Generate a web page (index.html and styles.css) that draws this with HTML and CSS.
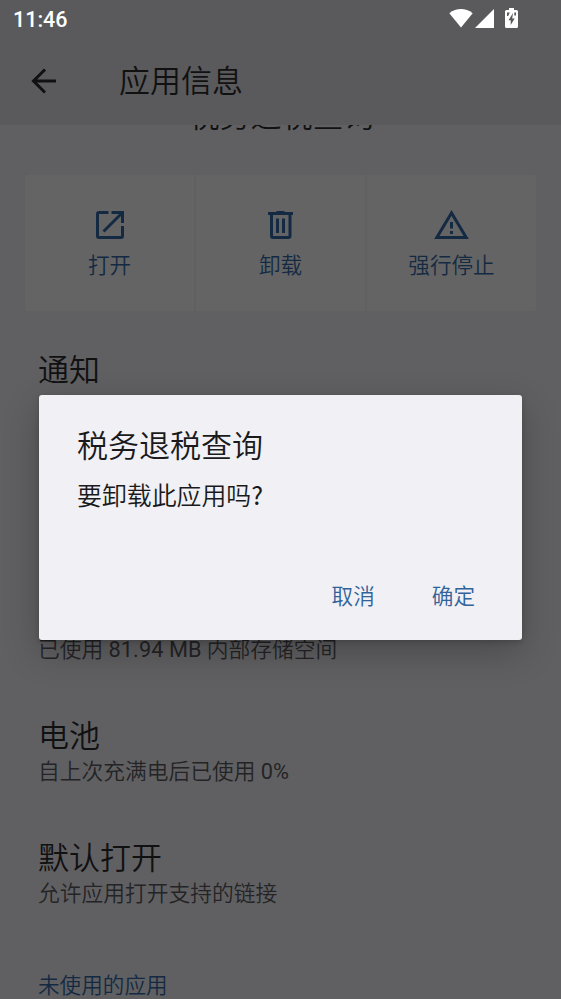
FILE: index.html
```html
<!DOCTYPE html>
<html lang="zh-CN">
<head>
<meta charset="utf-8">
<title>应用信息</title>
<link rel="stylesheet" href="styles.css">
</head>
<body>
<div class="screen">
  <header class="top">
    <div class="status">
      <span class="clock">11:46</span>
      <svg class="status-icons" width="72" height="24" viewBox="0 0 72 24" fill="#fff">
        <path d="M.3 5.2C7.5-.3 16.500-.3 23.700 5.200L12 19.500z"/>
        <path d="M26 20 45 1V20z"/>
        <path fill-rule="evenodd" d="M60 0h5v2h2.500q1.500 0 1.500 1.500v15q0 1.500-1.500 1.500h-10q-1.500 0-1.500-1.500v-15q0-1.500 1.500-1.500h2.500zM64 5l-4.500 7.200h2.200V17l4-6.600h-2.500zM58 4.500v3.500h1.200l1.600-3.500zM65.300 4.500v3h1.700v-3z"/>
      </svg>
    </div>
    <div class="appbar">
      <svg class="back" width="26" height="26" viewBox="0 0 26 26" fill="none" stroke="#111112" stroke-width="3"><path d="M25 13H3M14 1.500 2.500 13 14 24.500"/></svg>
      <h1>应用信息</h1>
    </div>
  </header>
  <main>
    <div class="app-name-clip"><div class="app-name">税务退税查询</div></div>
    <div class="actions">
      <div class="action">
        <svg width="34" height="34" viewBox="-1 0 34 34" fill="none" stroke="#142a43" stroke-width="3"><path d="M14.500 4.500H5q-1.500 0-1.500 1.500v22q0 1.500 1.500 1.500h22q1.500 0 1.500-1.500V18M17.500 4.500h11V15M28 5 9.500 23.500"/></svg>
        <span>打开</span>
      </div>
      <div class="action">
        <svg width="34" height="34" viewBox="0 0 34 34" fill="none" stroke="#142a43" stroke-width="3"><path d="M4 5.500h25M12.500 4.500h8M7.500 6v22q0 1.500 1.500 1.500h15.500q1.500 0 1.500-1.500V6M13.500 10.500V25M19.500 10.500V25"/></svg>
        <span>卸载</span>
      </div>
      <div class="action">
        <svg width="36" height="34" viewBox=".5 0 36 34"><path fill="none" stroke="#142a43" stroke-width="3" d="M18 5 3.300 29.500h29.400z"/><path fill="#142a43" d="M16.500 14h3v6.500h-3zM16.500 23h3v3h-3z"/></svg>
        <span>强行停止</span>
      </div>
    </div>
    <div class="list">
      <section class="notice"><h2>通知</h2></section>
      <section class="storage"><p>已使用 <span class="latin">81.94 MB</span> 内部存储空间</p></section>
      <section class="item"><h2>电池</h2><p>自上次充满电后已使用 <span class="latin">0%</span></p></section>
      <section class="item"><h2>默认打开</h2><p>允许应用打开支持的链接</p></section>
      <div class="category">未使用的应用</div>
    </div>
  </main>
  <div class="dialog" role="dialog">
    <h2>税务退税查询</h2>
    <p>要卸载此应用吗<span class="latin">?</span></p>
    <div class="buttons"><span>取消</span><span>确定</span></div>
  </div>
</div>
</body>
</html>
```
FILE: styles.css
```css
* { box-sizing: border-box; margin: 0; padding: 0; }
body {
  font-family: Roboto, "Noto Sans CJK SC", sans-serif;
  background: #606062;
  color: #111112;
  font-weight: 350;
}
.latin { font-weight: 400; }
.screen { position: relative; height: 999px; overflow: hidden; }
.top { height: 125px; background: #5a5a5c; }
.status {
  display: flex; justify-content: space-between; align-items: flex-start;
  height: 38px; padding: 8px 40px 0 13px;
}
.clock { font-size: 21.500px; line-height: 24px; font-weight: 500; color: #fff; }
.status-icons { display: block; }
.appbar { display: flex; align-items: center; height: 87px; padding-left: 31px; }
.back { margin: 0 62px 2px 0; }
h1, h2 { font-size: 31px; line-height: 42px; font-weight: inherit; }
.app-name-clip { display: flex; flex-direction: column; align-items: center; justify-content: flex-end; height: 13px; padding-left: 2px; overflow: hidden; }
.app-name { flex: none; font-size: 31px; line-height: 42px; }
.actions { display: grid; grid-template-columns: repeat(3, 1fr); gap: 2px; margin: 37px 25px 0; height: 136px; border-radius: 3px; overflow: hidden; }
.action {
  display: flex; flex-direction: column; align-items: center;
  background: #646464; color: #142a43;
  padding-top: 33px; font-size: 21.600px; line-height: 30px;
}
.action span { margin-top: 9px; }
.action svg { display: block; }
.list { padding: 39px 38px 0; }
.list p { font-size: 21.750px; line-height: 30px; color: #242426; }
.list .item p { margin-top: -1px; }
.notice { height: 285px; }
.storage { height: 81px; }
.item { height: 122px; }
.category { font-size: 21.600px; line-height: 30px; color: #142a43; padding-top: 11px; }
.storage .latin { letter-spacing: .05px; }
.dialog {
  position: absolute; left: 39px; top: 395px; width: 483px; height: 245.400px;
  display: flex; flex-direction: column;
  padding: 31px 47px 27px 38px;
  background: #f0f0f5; border-radius: 3px; color: #1a1a1c;
  box-shadow: 0 12px 36px rgba(0, 0, 0, .24), 0 2px 5px rgba(0, 0, 0, .16);
}
.dialog p { font-family: "Noto Sans CJK SC", sans-serif; font-size: 24.900px; line-height: 36px; margin-top: 8px; }
.buttons { display: flex; justify-content: flex-end; gap: 57px; margin-top: auto; font-size: 21.600px; line-height: 32px; color: #30639a; }
```
